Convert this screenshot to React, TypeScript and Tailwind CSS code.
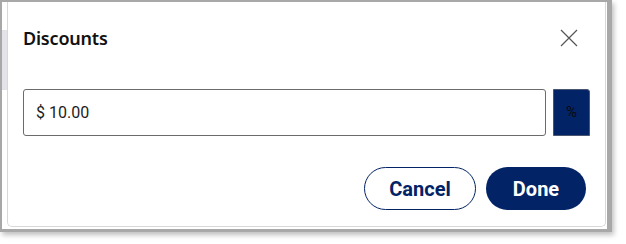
import React from 'react';

const navy = 'bg-[#022366]';

function CloseIcon() {
  return (
    <svg width="18" height="18" viewBox="0 0 18 18" className="text-[#555]">
      <path d="M1 1L17 17M17 1L1 17" stroke="currentColor" strokeWidth="1.2" fill="none" />
    </svg>
  );
}

export default function App() {
  return (
    <div className="w-[626px] h-[244px] bg-white font-['Roboto',sans-serif]">
      {/* screenshot frame */}
      <div className="w-[612px] h-[232px] border-t-2 border-l-2 border-r-[5px] border-b-[3px] border-[#a8a8a8] shadow-[2px_3px_5px_rgba(0,0,0,0.25)] flex bg-white">
        {/* page peeking out on the left */}
        <div className="w-[5px] flex flex-col">
          <div className="h-[28px] bg-white" />
          <div className="h-[60px] bg-[#e4e4e8]" />
        </div>

        {/* dialog */}
        <div className="w-[599px] h-[225px] bg-white border-x border-b border-[#d8d8d8] rounded-b-[5px] flex flex-col">
          <div className="flex items-center justify-between pl-[15px] pr-[27px] pt-[17px] h-[54px]">
            <h2 className="font-['Noto_Sans',sans-serif] font-semibold text-[18px] leading-none text-[#111] tracking-[-0.2px]">
              Discounts
            </h2>
            <CloseIcon />
          </div>

          <div className="flex gap-[7px] pl-[15px] mt-[33px]">
            <div className="w-[523px] h-[47px] border border-[#6b6b6b] rounded-[3px] flex items-center pl-[12px] text-[16px] text-[#1c1c1c]">
              $ 10.00
            </div>
            <button className={`w-[37px] h-[47px] ${navy} rounded-tr-[3px] border border-[#4a5670] flex items-center justify-center text-[15px] text-[#0a0a0a]`}>
              %
            </button>
          </div>

          <div className="flex justify-end gap-[10px] pr-[19px] mt-[31px]">
            <button className="w-[112px] h-[43px] rounded-full border border-[#022366] text-[#022366] text-[20px] font-bold">
              Cancel
            </button>
            <button className={`w-[100px] h-[43px] rounded-full ${navy} text-white text-[20px] font-bold`}>
              Done
            </button>
          </div>
        </div>
      </div>
    </div>
  );
}
